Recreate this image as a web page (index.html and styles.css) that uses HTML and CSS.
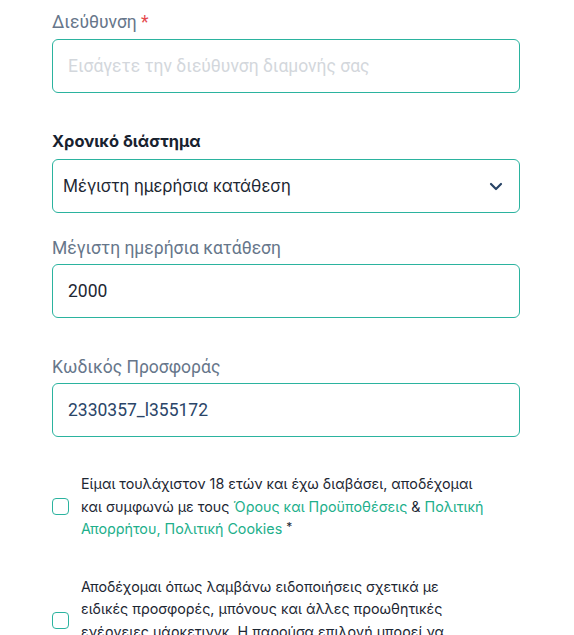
FILE: index.html
```html
<!DOCTYPE html>
<html lang="el">
<head>
<meta charset="utf-8">
<title>Form</title>
<link rel="stylesheet" href="styles.css">
</head>
<body>
<form class="form">
  <div class="field field-address">
    <label class="label">Διεύθυνση <span class="req">*</span></label>
    <input class="input" type="text" placeholder="Εισάγετε την διεύθυνση διαμονής σας">
  </div>

  <div class="field field-period">
    <label class="heading">Χρονικό διάστημα</label>
    <div class="select">
      <span class="select-text">Μέγιστη ημερήσια κατάθεση</span>
      <svg class="chevron" width="14" height="9" viewBox="0 0 14 9" aria-hidden="true"><path d="M2 2 L7 7 L12 2" fill="none" stroke="#284466" stroke-width="2.2" stroke-linecap="round" stroke-linejoin="round"/></svg>
    </div>
  </div>

  <div class="field field-limit">
    <label class="label">Μέγιστη ημερήσια κατάθεση</label>
    <input class="input input-value" type="text" value="2000">
  </div>

  <div class="field field-code">
    <label class="label">Κωδικός Προσφοράς</label>
    <input class="input input-code" type="text" value="2330357_l355172">
  </div>

  <div class="check check-terms">
    <span class="box"></span>
    <p class="check-text">Είμαι τουλάχιστον 18 ετών και έχω διαβάσει, αποδέχομαι και συμφωνώ με τους <a class="link" href="#">Όρους και Προϋποθέσεις</a> &amp; <a class="link" href="#">Πολιτική Απορρήτου, Πολιτική Cookies</a> <span class="star">*</span></p>
  </div>

  <div class="check check-marketing">
    <span class="box"></span>
    <p class="check-text">Αποδέχομαι όπως λαμβάνω ειδοποιήσεις σχετικά με ειδικές προσφορές, μπόνους και άλλες προωθητικές ενέργειες μάρκετινγκ. Η παρούσα επιλογή μπορεί να ανακληθεί οποιαδήποτε στιγμή.</p>
  </div>
</form>
</body>
</html>
```
FILE: styles.css
```css
* { box-sizing: border-box; }
html, body { margin: 0; padding: 0; background: #ffffff; }
body { font-family: Roboto, "Noto Sans", sans-serif; }

.form {
  width: 468px;
  margin-left: 52px;
  padding-top: 10px;
  display: flex;
  flex-direction: column;
}

.field { display: flex; flex-direction: column; }
.field-address .label { margin-bottom: 5px; }
.field-period { margin-top: 36px; }
.field-period .heading { margin-bottom: 6px; }
.field-limit { margin-top: 23px; }
.field-limit .label { margin-bottom: 4px; }
.field-code { margin-top: 37px; }
.field-code .label { margin-bottom: 4px; }

.label {
  font-size: 17.5px;
  line-height: 24px;
  color: #66768a;
}
.req { color: #e5484d; }

.heading {
  font-family: Inter, Roboto, sans-serif;
  font-weight: 700;
  font-size: 16.4px;
  line-height: 24px;
  color: #18222f;
}

.input {
  height: 54px;
  width: 100%;
  border: 1px solid #2bb39f;
  border-radius: 6px;
  padding: 0 15px;
  font-family: Roboto, sans-serif;
  font-size: 17.5px;
  color: #1d2733;
  background: #fff;
  outline: none;
}
.input::placeholder { color: #d3d7dc; }
.input-code { color: #2a4568; }

.select {
  height: 54px;
  border: 1px solid #2bb39f;
  border-radius: 6px;
  padding: 0 16px 0 10px;
  display: flex;
  align-items: center;
  justify-content: space-between;
}
.select-text {
  font-family: Inter, Roboto, sans-serif;
  font-size: 16.6px;
  color: #1d2733;
}
.chevron { display: block; }

.check {
  display: flex;
  align-items: center;
  gap: 12px;
  padding-right: 33px;
}
.check-terms { margin-top: 36px; }
.check-marketing { margin-top: 35px; }
.box {
  flex: none;
  width: 17px;
  height: 17px;
  border: 1.5px solid #2bb39f;
  border-radius: 4px;
}
.check-text {
  margin: 0;
  font-family: Inter, Roboto, sans-serif;
  font-size: 14.3px;
  line-height: 22.5px;
  color: #1d2733;
}
.link { color: #22af8b; text-decoration: none; }
.star { color: #1d2733; font-size: 12px; line-height: 12px; vertical-align: 3px; }
```
